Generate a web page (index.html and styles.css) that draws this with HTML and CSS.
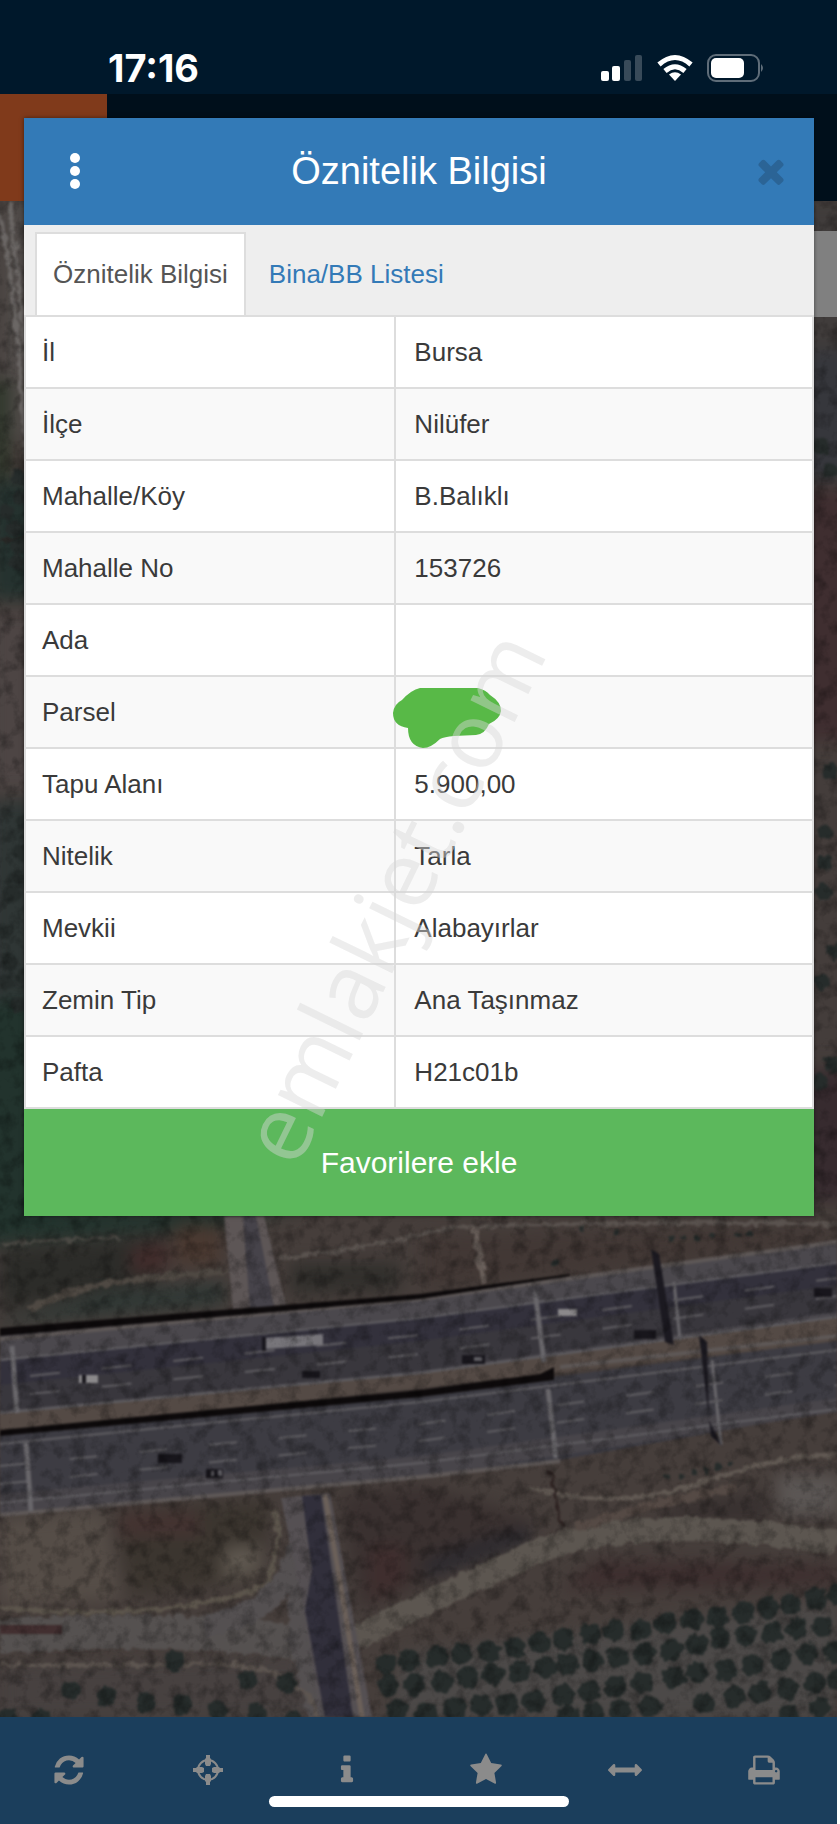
FILE: index.html
```html
<!DOCTYPE html>
<html lang="tr">
<head>
    <meta charset="UTF-8">
    <meta name="viewport" content="width=device-width, initial-scale=1.0">
    <title>Öznitelik Bilgisi</title>
    <link rel="stylesheet" href="styles.css">
</head>
<body>

<div class="screen">
    <div class="status-bar">
        <div class="time">17:16</div>
        <div class="status-icons">
            <svg width="42" height="28" viewBox="0 0 42 28" fill="#fff">
                <rect x="0" y="17" width="8" height="10" rx="2"/>
                <rect x="11" y="12" width="8" height="15" rx="2"/>
                <rect x="23" y="6" width="7" height="21" rx="2" opacity=".22"/>
                <rect x="34" y="1" width="7" height="26" rx="2" opacity=".22"/>
            </svg>
            <svg width="36" height="28" viewBox="0 0 36 28" fill="none" stroke="#fff" stroke-width="5">
                <path d="M2 10.500Q18 -3.500 34 10.500"/>
                <path d="M8 17Q18 8.500 28 17"/>
                <path d="M12 20.500Q18 16 24 20.500L18 27Z" fill="#fff" stroke="none"/>
            </svg>
            <svg width="58" height="28" viewBox="0 0 58 28">
                <rect x="1" y="1" width="51" height="26" rx="8" fill="none" stroke="#5f6d79" stroke-width="2"/>
                <rect x="4" y="4" width="33" height="20" rx="5" fill="#fff"/>
                <path d="M54 10q4 4 0 8z" fill="#5f6d79"/>
            </svg>
        </div>
    </div>

    <div class="nav-bar"><div class="nav-menu"></div></div>

    <div class="map">
        <svg class="map-image" viewBox="0 201 837 1516" preserveAspectRatio="xMidYMax slice">
            <defs>
                <filter id="soft" x="-20%" y="-20%" width="140%" height="140%" color-interpolation-filters="sRGB"><feGaussianBlur stdDeviation="8"/></filter>
                <filter id="blur" color-interpolation-filters="sRGB"><feGaussianBlur stdDeviation=".9"/></filter>
                <filter id="rough" color-interpolation-filters="sRGB">
                    <feTurbulence type="fractalNoise" baseFrequency=".12" numOctaves="2" seed="4"/>
                    <feDisplacementMap in="SourceGraphic" scale="9" xChannelSelector="R" yChannelSelector="G"/>
                    <feGaussianBlur stdDeviation="1"/>
                </filter>
                <filter id="grain" x="0" y="0" width="100%" height="100%" color-interpolation-filters="sRGB">
                    <feTurbulence type="fractalNoise" baseFrequency=".07" numOctaves="4" seed="9"/>
                    <feColorMatrix values="0 0 0 0 0  0 0 0 0 0  0 0 0 0 0  1.800 0 0 0 -.8"/>
                </filter>
            </defs>

            <!-- ground -->
            <rect y="201" width="837" height="1516" fill="#463e3b"/>
            <g filter="url(#soft)">
                <path d="M0 201H40V440H0Z" fill="#4f4a48"/>
                <path d="M-10 380H10V480H-10Z" fill="#30382c"/>
                <path d="M-10 480H40V600H-10Z" fill="#25322f"/>
                <path d="M-10 612H40V790H-10Z" fill="#4d4544"/>
                <path d="M-10 800H40V1000H-10Z" fill="#2f3635"/>
                <path d="M-20 1000H60V1210H310L200 1228 -20 1245Z" fill="#22332d"/>
                <path d="M800 201H850V350H800Z" fill="#403c3b"/>
                <path d="M800 350H850V480H800Z" fill="#36373c"/>
                <path d="M800 490H850V740H800Z" fill="#3f2e30"/>
                <path d="M800 760H850V1060H800Z" fill="#443d3b"/>
                <path d="M800 1070H850V1200H800Z" fill="#372b2f"/>
                <path d="M0 1250L170 1235 160 1280 0 1310Z" fill="#2c2c29"/>
                <path d="M0 1320L110 1290 225 1282V1305L0 1325Z" fill="#303835"/>
                <path d="M130 1248l38-8v30l-38 4z" fill="#412c2b"/>
                <path d="M175 1225h45v40h-45z" fill="#4a3931"/>
                <path d="M290 1262H400V1290L290 1295Z" fill="#312f2c"/>
                <path d="M420 1235L837 1228V1240L620 1270 420 1290Z" fill="#423835"/>
                <path d="M0 1520L105 1510 120 1600 0 1605Z" fill="#554d47"/>
                <path d="M115 1510L270 1500 260 1580 130 1595Z" fill="#3b352f"/>
                <path d="M120 1512h80v24h-80z" fill="#443331"/>
                <path d="M225 1545h35v30l-40 5z" fill="#5e574f"/>
                <path d="M340 1495L420 1485 540 1520 430 1580 360 1610Z" fill="#3a3130"/>
                <path d="M370 1545h35v40l-35 15z" fill="#3f2e2e"/>
                <path d="M425 1560L530 1525V1542L425 1580Z" fill="#2b292e"/>
                <path d="M680 1502L770 1492V1522H650Z" fill="#383130"/>
                <path d="M775 1475H840V1515H780Z" fill="#5b5654"/>
                <path d="M600 1560L837 1565V1585L560 1590Z" fill="#3d2f2f"/>
                <path d="M0 1665L300 1655 330 1717H0Z" fill="#474140"/>
                <path d="M400 1655L837 1600V1717H390Z" fill="#4c4948"/>
            </g>

            <!-- dirt tracks and field edges -->
            <g filter="url(#rough)" fill="none">
                <path d="M0 215Q18 300 26 460M10 201L30 400" stroke="#6b6765" stroke-width="4"/>
                <path d="M0 1244Q80 1238 120 1238" stroke="#4b4944" stroke-width="3"/>
                <path d="M30 1310Q70 1285 150 1278T225 1270" stroke="#4f4943" stroke-width="7"/>
                <path d="M280 1258Q350 1252 450 1228Q640 1220 837 1224" stroke="#5a534f" stroke-width="4"/>
                <path d="M475 1228L484 1284" stroke="#6a605b" stroke-width="7"/>
                <path d="M0 1636Q190 1625 315 1645" stroke="#555150" stroke-width="34"/>
                <path d="M0 1608Q180 1622 265 1585Q285 1545 274 1510" stroke="#5c554c" stroke-width="5"/>
                <path d="M205 1625Q285 1615 300 1540V1640L320 1717" stroke="#545051" stroke-width="22"/>
                <path d="M0 1665H170Q300 1655 318 1717" stroke="#5d5550" stroke-width="4"/>
                <path d="M352 1640Q430 1600 530 1555T837 1543" stroke="#5c5650" stroke-width="24"/>
                <path d="M530 1487Q620 1512 700 1483T837 1455" stroke="#615953" stroke-width="5"/>
                <path d="M575 1528Q660 1500 735 1488" stroke="#554a45" stroke-width="9"/>
                <path d="M550 1470L562 1530" stroke="#2d2221" stroke-width="3"/>
                <path d="M0 541L25 538" stroke="#292725" stroke-width="3"/>
            </g>

            <g filter="url(#blur)">
                <path d="M0 1625H62V1634H0Z" fill="#422f30"/>

                <!-- side road -->
                <path d="M224 1216H264L286 1305 233 1309Z" fill="#5d5656"/>
                <path d="M243 1216H256L274 1307 250 1309Z" fill="#46434a"/>
                <path d="M281 1498L330 1493 372 1717H320L302 1600Z" fill="#555053"/>
                <path d="M302 1496L321 1495 353 1717H325L305 1610 312 1570Z" fill="#312f3b"/>
                <path d="M325 1495L338 1570 348 1630 362 1717" fill="none" stroke="#6b6059" stroke-width="5"/>

                <!-- motorway -->
                <path d="M0 1333L420 1297 600 1274 837 1240V1330L560 1365 0 1430Z" fill="#4b484d"/>
                <path d="M0 1361L420 1318 837 1262V1306L420 1363 0 1408Z" fill="#33313c"/>
                <path d="M0 1385L420 1341 837 1285V1312L420 1371 0 1411Z" fill="#39373d"/>
                <path d="M0 1414L420 1374 837 1317V1342L0 1434Z" fill="#544a45"/>
                <path d="M0 1433L420 1394 560 1376 837 1341V1410L560 1460 420 1475 0 1514Z" fill="#3d3c43"/>
                <path d="M0 1494L420 1456 837 1398V1412L420 1477 0 1515Z" fill="#48454a"/>
                <g fill="none" stroke="#605e62" stroke-width="2">
                    <path d="M0 1360L420 1318 837 1263M0 1413L420 1373 837 1317M0 1444L420 1402 837 1350M0 1503L420 1463 837 1409"/>
                    <path d="M30 1376L420 1335 837 1278M30 1394L420 1354 837 1296" stroke-dasharray="30 42"/>
                    <path d="M0 1466L420 1424 837 1367M0 1484L420 1441 837 1385" stroke-dasharray="28 42"/>
                </g>
                <path d="M0 1515L420 1477 560 1461M0 1339L420 1299 837 1242M560 1367L837 1336" fill="none" stroke="#5e5857" stroke-width="4"/>
                <path d="M0 1328L420 1294 570 1274V1276L420 1299 0 1336ZM0 1430L420 1390 540 1374 554 1367V1380L420 1397 0 1436Z" fill="#0d0a0b"/>
                <g fill="none" stroke="#68666a" stroke-width="5">
                    <path d="M12 1346L17 1413M26 1443L31 1511M535 1291L544 1362M548 1389L556 1458"/>
                    <path d="M674 1282L680 1340M712 1360L721 1445" stroke-width="3"/>
                </g>
                <path d="M651 1249L659 1254 674 1345 665 1342ZM699 1335L707 1342 709 1420 722 1446 711 1436Z" fill="#1b1920"/>

                <!-- vehicles -->
                <path d="M266 1338L323 1334V1345L266 1349Z" fill="#77757a"/>
                <path d="M79 1375h19v8h-19zM558 1309h19v7h-19z" fill="#8b898b"/>
                <path d="M262 1337h4v14h-4zM82 1375h4v8h-4zM158 1454h24v9h-24zM634 1330h22v9h-22zM462 1355h23v9h-23zM302 1371h18v7h-18zM206 1469h17v9h-17zM814 1288h18v9h-18z" fill="#18161c"/>
                <path d="M211 1471h3v5h-3zM218 1470h4v6h-4zM474 1357h8v4h-8z" fill="#5e5d62"/>
            </g>

            <!-- trees -->
            <g filter="url(#rough)" transform="translate(2 2)" fill="none" stroke="#262c2b" stroke-linecap="round" stroke-width="22">
                <path d="M435 1655h0M460 1652h0M487 1650h0M512 1645h0M538 1640h0M562 1637h0M588 1632h0M612 1628h0M638 1628h0M663 1622h0M690 1617h0M715 1614h0M741 1610h0M766 1606h0M788 1603h0M814 1597h0M836 1592h0"/>
                <path d="M384 1662h0M407 1658h0M386 1683h0M412 1682h0M440 1680h0M466 1676h0M491 1672h0M517 1670h0M543 1665h0M565 1662h0M590 1658h0M616 1655h0M642 1652h0M670 1648h0M694 1643h0M719 1636h0M744 1634h0M770 1630h0M795 1627h0M820 1625h0"/>
                <path d="M395 1708h0M424 1712h0M452 1706h0M479 1703h0M505 1703h0M532 1699h0M562 1693h0M587 1689h0M613 1685h0M641 1680h0M672 1676h0M695 1671h0M724 1668h0M750 1663h0M779 1658h0M805 1652h0M832 1650h0"/>
                <path d="M566 1714h0M592 1711h0M618 1708h0M648 1705h0M702 1702h0M732 1694h0M758 1691h0M786 1687h0M813 1681h0M836 1678h0M787 1714h0M818 1706h0"/>
                <path d="M172 1659h0M69 1688h0M104 1695h0M144 1700h0M180 1702h0M246 1677h0M284 1681h0M216 1708h0M254 1711h0M290 1719h0M5 1716h0M40 1718h0" stroke-width="20"/>
                <path d="M5 510h0M18 495h0M12 527h0M16 545h0M15 560h0M18 475h0M22 820h0M20 850h0M14 875h0M10 892h0M4 930h0M8 960h0M4 980h0M16 1003h0M22 975h0M828 770h0M824 830h0M822 860h0M822 890h0M832 950h0M820 980h0M830 1062h0M818 1080h0M820 445h0M828 468h0" stroke-width="16"/>
                <path d="M666 1475h0M680 1473h0M692 1470h0M704 1468h0M716 1465h0M727 1462h0M670 1236h0M682 1236h0M695 1235h0M710 1234h0M735 1233h0M748 1232h0M580 1227h0M614 1229h0M554 1261h0" stroke-width="6"/>
            </g>
            <rect y="201" width="837" height="1516" filter="url(#grain)" opacity=".4"/>
        </svg>
        <div class="map-control"></div>
    </div>

    <div class="toolbar">
        <button type="button" aria-label="Yenile">
            <svg viewBox="0 0 1792 1792"><path d="M1639 1056q0 5-1 7-64 268-268 434.500t-478 166.500q-146 0-282.500-55t-243.500-157l-129 129q-19 19-45 19t-45-19-19-45v-448q0-26 19-45t45-19h448q26 0 45 19t19 45-19 45l-137 137q71 66 161 102t187 36q134 0 250-65t186-179q11-17 53-117 8-23 30-23h192q13 0 22.500 9.500t9.500 22.500zm25-800v448q0 26-19 45t-45 19h-448q-26 0-45-19t-19-45 19-45l138-138q-148-137-349-137-134 0-250 65t-186 179q-11 17-53 117-8 23-30 23h-199q-13 0-22.500-9.500t-9.500-22.500v-7q65-268 270-434.500t480-166.500q146 0 284 55.500t245 156.500l130-129q19-19 45-19t45 19 19 45z"/></svg>
        </button>
        <button type="button" aria-label="Konum">
            <svg viewBox="0 0 34 34"><circle cx="17" cy="17" r="10" fill="none" stroke="#8b8b8b" stroke-width="2"/><path d="M15 2h4v3l1 1v5l-1 2h-4l-1-2V6l1-1zM15 32h4v-3l1-1v-5l-1-2h-4l-1 2v5l1 1zM2 15v4h3l1 1h5l2-1v-4l-2-1H6l-1 1zM32 15v4h-3l-1 1h-5l-2-1v-4l2-1h5l1 1z"/></svg>
        </button>
        <button type="button" aria-label="Bilgi">
            <svg viewBox="0 0 1792 1792"><path d="M1216 1344v128q0 26-19 45t-45 19h-512q-26 0-45-19t-19-45v-128q0-26 19-45t45-19h64v-384h-64q-26 0-45-19t-19-45v-128q0-26 19-45t45-19h384q26 0 45 19t19 45v576h64q26 0 45 19t19 45zm-128-1152v192q0 26-19 45t-45 19h-256q-26 0-45-19t-19-45v-192q0-26 19-45t45-19h256q26 0 45 19t19 45z"/></svg>
        </button>
        <button type="button" aria-label="Favoriler">
            <svg viewBox="0 0 1792 1792"><path d="M1728 647q0 22-26 48l-363 354 86 500q1 7 1 20 0 21-10.500 35.500t-30.500 14.500q-19 0-40-12l-449-236-449 236q-22 12-40 12-21 0-31.500-14.500t-10.500-35.500q0-6 2-20l86-500-364-354q-25-27-25-48 0-37 56-46l502-73 225-455q19-41 49-41t49 41l225 455 502 73q56 9 56 46z"/></svg>
        </button>
        <button type="button" aria-label="Ölçüm">
            <svg viewBox="0 0 1792 1792"><path d="M1792 896q0 26-19 45l-256 256q-19 19-45 19t-45-19-19-45v-128h-1024v128q0 26-19 45t-45 19-45-19l-256-256q-19-19-19-45t19-45l256-256q19-19 45-19t45 19 19 45v128h1024v-128q0-26 19-45t45-19 45 19l256 256q19 19 19 45z"/></svg>
        </button>
        <button type="button" aria-label="Yazdır">
            <svg viewBox="0 0 1792 1792"><path d="M448 1536h896v-256h-896v256zm0-640h896v-384h-160q-40 0-68-28t-28-68v-160h-640v640zm1152 64q0-26-19-45t-45-19-45 19-19 45 19 45 45 19 45-19 19-45zm128 0v416q0 13-9.500 22.500t-22.500 9.500h-224v160q0 40-28 68t-68 28h-960q-40 0-68-28t-28-68v-160h-224q-13 0-22.500-9.500t-9.500-22.500v-416q0-79 56.500-135.500t135.500-56.500h64v-544q0-40 28-68t68-28h672q40 0 88 20t76 48l152 152q28 28 48 76t20 88v256h64q79 0 135.500 56.500t56.500 135.500z"/></svg>
        </button>
    </div>
    <div class="home-indicator"></div>

    <div class="modal">
        <div class="modal-header">
            <button type="button" class="menu-button" aria-label="Menü">
                <svg width="10" height="38" viewBox="0 0 10 38" fill="#fff"><circle cx="5" cy="6" r="5"/><circle cx="5" cy="19" r="5"/><circle cx="5" cy="32" r="5"/></svg>
            </button>
            <div class="title">Öznitelik Bilgisi</div>
            <button type="button" class="close-button" aria-label="Kapat">
                <svg width="38" height="38" viewBox="0 0 1792 1792" fill="#2b6496"><path d="M1490 1322q0 40-28 68l-136 136q-28 28-68 28t-68-28l-294-294-294 294q-28 28-68 28t-68-28l-136-136q-28-28-28-68t28-68l294-294-294-294q-28-28-28-68t28-68l136-136q28-28 68-28t68 28l294 294 294-294q28-28 68-28t68 28l136 136q28 28 28 68t-28 68l-294 294 294 294q28 28 28 68z"/></svg>
            </button>
        </div>
        <div class="tabs">
            <a href="#oznitelik" class="tab active">Öznitelik Bilgisi</a>
            <a href="#bina" class="tab">Bina/BB Listesi</a>
        </div>
        <table class="info-table">
            <tr><th scope="row">İl</th><td>Bursa</td></tr>
            <tr><th scope="row">İlçe</th><td>Nilüfer</td></tr>
            <tr><th scope="row">Mahalle/Köy</th><td>B.Balıklı</td></tr>
            <tr><th scope="row">Mahalle No</th><td>153726</td></tr>
            <tr><th scope="row">Ada</th><td></td></tr>
            <tr>
                <th scope="row">Parsel</th>
                <td class="masked">
                    <svg class="mask" width="110" height="62" viewBox="0 0 110 62"><path d="M28 1H86Q94 3 98 8Q109 15 109 24Q108 32 97 37Q93 47 84 48L62 49Q52 50 48 52Q39 61 31 61Q16 59 16 41Q1 39 1 26Q2 17 10 13Q19 3 28 1Z" fill="#58b947"/></svg>
                </td>
            </tr>
            <tr><th scope="row">Tapu Alanı</th><td>5.900,00</td></tr>
            <tr><th scope="row">Nitelik</th><td>Tarla</td></tr>
            <tr><th scope="row">Mevkii</th><td>Alabayırlar</td></tr>
            <tr><th scope="row">Zemin Tip</th><td>Ana Taşınmaz</td></tr>
            <tr><th scope="row">Pafta</th><td>H21c01b</td></tr>
        </table>
        <button type="button" class="favorite-button">Favorilere ekle</button>
    </div>

    <div class="watermark">emlakjet.com</div>
</div>

</body>
</html>
```
FILE: styles.css
```css
* { box-sizing: border-box; }
body { margin: 0; background-color: #ffffff; font-family: "Liberation Sans", Arial, sans-serif; font-size: 26px; color: #3a3a3a; }
button { border: 0; padding: 0; background: none; font-family: inherit; }
svg { display: block; }

.screen { position: relative; display: flex; flex-direction: column; min-height: 100vh; margin-right: 3px; overflow: hidden; }

.status-bar { display: flex; justify-content: space-between; height: 94px; padding: 47px 72px 0 108px; background-color: #00182b; }
.time { font-family: Inter, sans-serif; font-size: 38px; font-weight: 700; line-height: 42px; color: #ffffff; }
.status-icons { display: flex; gap: 14px; padding-top: 7px; }

.nav-bar { height: 107px; background-color: #000f1b; }
.nav-menu { width: 107px; height: 107px; background-color: #803a1b; }

.map { position: relative; flex: 1; overflow: hidden; background-color: #463e3b; }
.map-image { position: absolute; width: 100%; height: 100%; }
.map-control { position: absolute; top: 30px; right: 0; width: 24px; height: 86px; background-color: #808080; }

.toolbar { display: flex; height: 107px; padding: 0 4px 2px 0; background-color: #1b3e5c; }
.toolbar button { flex: 1; display: flex; align-items: center; justify-content: center; }
.toolbar svg { width: 34px; height: 34px; fill: #8b8b8b; }
.home-indicator { position: absolute; bottom: 17px; left: 50%; width: 300px; height: 11px; margin-left: -150px; border-radius: 6px; background-color: #ffffff; }

.modal { position: absolute; top: 118px; left: 24px; right: 23px; background-color: #ffffff; box-shadow: 0 0 4px rgba(0, 0, 0, 0.5); }
.modal-header { display: flex; align-items: center; height: 107px; padding: 0 24px 2px; background-color: #337ab7; }
.menu-button { display: flex; width: 60px; padding-left: 22px; }
.close-button { display: flex; justify-content: flex-end; width: 60px; }
.title { flex: 1; font-size: 38px; line-height: 44px; text-align: center; color: #ffffff; }

.tabs { display: flex; height: 90px; padding: 7px 0 0 11px; background-color: #eeeeee; }
.tab { padding: 0 21px; line-height: 80px; color: #337ab7; text-decoration: none; border: 2px solid transparent; border-bottom: 0; }
.tab.active { padding: 0 16px; color: #555555; background-color: #ffffff; border-color: #dddddd; }

.info-table { width: 100%; table-layout: fixed; border-collapse: collapse; }
.info-table th, .info-table td { height: 72px; padding: 0 16px; border: 2px solid #dddddd; text-align: left; font-weight: normal; }
.info-table th { width: 47%; }
.info-table td { padding-left: 18px; }
.info-table tr:nth-child(even) { background-color: #f9f9f9; }
.masked { position: relative; }
.mask { position: absolute; top: 10px; left: -4px; }

.favorite-button { display: block; width: 100%; height: 107px; background-color: #5cb85c; color: #ffffff; font-size: 30px; }

.watermark { position: absolute; top: 896px; left: 391px; transform: translate(-50%, -50%) rotate(-64deg); font-family: "Open Sans", sans-serif; font-size: 92px; line-height: 100px; color: rgba(215, 215, 215, 0.45); pointer-events: none; }
```
